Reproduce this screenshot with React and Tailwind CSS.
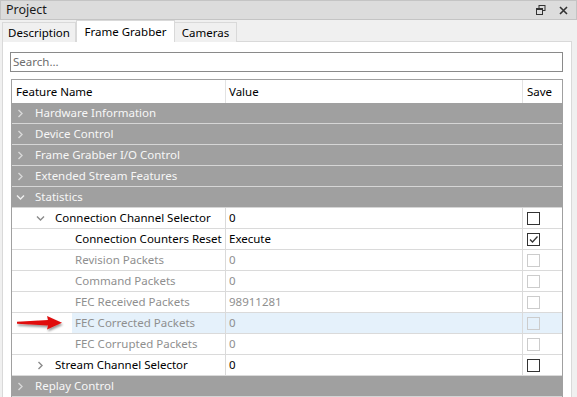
import React from "react";

const Chevron = ({ open, color = "#8a8a8a" }) => (
  <svg width="9" height="9" viewBox="0 0 9 9" className="shrink-0">
    {open ? (
      <path d="M1 2.5 L4.5 6 L8 2.5" fill="none" stroke={color} strokeWidth="1.4" />
    ) : (
      <path d="M2.5 1 L6 4.5 L2.5 8" fill="none" stroke={color} strokeWidth="1.4" />
    )}
  </svg>
);

const Check = ({ checked, disabled }) => (
  <div
    className={`w-[13px] h-[13px] border flex items-center justify-center ${
      disabled ? "border-[#cccccc]" : "border-[#333333]"
    }`}
  >
    {checked && (
      <svg width="11" height="11" viewBox="0 0 11 11">
        <path d="M2 5.5 L4.5 8 L9.5 2.5" fill="none" stroke="#333" strokeWidth="1.3" />
      </svg>
    )}
  </div>
);

const GroupRow = ({ label, open }) => (
  <div className="flex items-center h-[21px] bg-[#a0a0a0] border-b border-[#d6d6d6] text-[#f7f7f7] whitespace-nowrap">
    <div className="pl-[4px] w-[23px] flex">
      <Chevron open={open} color={open ? "#f0f0f0" : "#d8d8d8"} />
    </div>
    <span>{label}</span>
  </div>
);

const Row = ({ label, value, indent, chevron, disabled, checked, highlight }) => (
  <div
    className={`flex h-[21px] border-b border-[#dadada] whitespace-nowrap ${
      highlight ? "bg-[#e5f1fb]" : "bg-white"
    } ${disabled ? "text-[#8f8f8f]" : "text-black"}`}
  >
    <div className="w-[214px] flex items-center border-r border-[#dadada] bg-white">
      <div className="flex items-center h-full shrink-0" style={{ width: indent }}>
        {chevron && (
          <div className="w-full flex justify-end pr-[10px]">
            <Chevron open={chevron === "open"} />
          </div>
        )}
      </div>
      <div
        className={`flex-1 h-full flex items-center ${
          highlight ? "bg-[#e5f1fb] -ml-[3px] pl-[3px]" : ""
        }`}
      >
        {label}
      </div>
    </div>
    <div className="w-[297px] flex items-center pl-[3px] border-r border-[#dadada]">{value}</div>
    <div className="flex-1 flex items-center pl-[4px]">
      <Check checked={checked} disabled={disabled} />
    </div>
  </div>
);

const App = () => {
  return (
    <div
      className="w-[577px] h-[397px] bg-[#f0f0f0] overflow-hidden text-[11.5px] relative"
      style={{ fontFamily: "'Noto Sans', 'Open Sans', sans-serif" }}
    >
      {/* title bar */}
      <div className="h-[20px] bg-[#dcdcdc] border border-[#c4c4c4] flex items-center justify-between pl-[5px] pr-[8px]">
        <span className="text-[12.5px] text-[#1a1a1a]">Project</span>
        <div className="flex items-center gap-[13px]">
          <svg width="10" height="10" viewBox="0 0 10 10">
            <rect x="3" y="0.5" width="6" height="5" fill="none" stroke="#333" strokeWidth="1" />
            <rect x="0.5" y="3.5" width="6" height="6" fill="#dcdcdc" stroke="#333" strokeWidth="1" />
            <line x1="0.5" y1="4.5" x2="6.5" y2="4.5" stroke="#333" />
          </svg>
          <svg width="9" height="9" viewBox="0 0 9 9">
            <path d="M1 1 L8 8 M8 1 L1 8" stroke="#333" strokeWidth="1.6" />
          </svg>
        </div>
      </div>

      {/* tabs */}
      <div className="flex items-end h-[22px] pl-[2px] relative z-10">
        <div className="h-[20px] w-[74px] flex items-center justify-center border border-b-0 border-[#d9d9d9] bg-[#f0f0f0]">
          Description
        </div>
        <div className="h-[22px] w-[99px] flex items-center justify-center border border-b-0 border-[#d9d9d9] bg-white">
          Frame Grabber
        </div>
        <div className="h-[20px] w-[62px] flex items-center justify-center border border-b-0 border-l-0 border-[#d9d9d9] bg-[#f0f0f0]">
          Cameras
        </div>
      </div>

      {/* panel */}
      <div className="ml-[2px] mr-[5px] -mt-[1px] h-[360px] bg-white border border-[#d9d9d9] pt-[10px] pl-[7px] pr-[8px]">
        <div className="h-[20px] border border-[#8a8a8a] flex items-center pl-[2px] text-[#6d6d6d]">
          Search…
        </div>

        <div className="mt-[7px] ml-[1px] border-l border-r border-t border-[#a0a0a0] h-[400px] relative">
          <div className="flex h-[23px] items-center bg-white text-black">
            <div className="w-[214px] h-full flex items-center pl-[4px] border-r border-[#e3e3e3]">Feature Name</div>
            <div className="w-[297px] h-full flex items-center pl-[3px] border-r border-[#e3e3e3]">Value</div>
            <div className="flex-1 h-full flex items-center pl-[4px]">Save</div>
          </div>
          <GroupRow label="Hardware Information" />
          <GroupRow label="Device Control" />
          <GroupRow label="Frame Grabber I/O Control" />
          <GroupRow label="Extended Stream Features" />
          <GroupRow label="Statistics" open />
          <Row label="Connection Channel Selector" value="0" indent={43} chevron="open" />
          <Row label="Connection Counters Reset" value="Execute" indent={63} checked />
          <Row label="Revision Packets" value="0" indent={63} disabled />
          <Row label="Command Packets" value="0" indent={63} disabled />
          <Row label="FEC Received Packets" value="98911281" indent={63} disabled />
          <Row label="FEC Corrected Packets" value="0" indent={63} disabled highlight />
          <Row label="FEC Corrupted Packets" value="0" indent={63} disabled />
          <Row label="Stream Channel Selector" value="0" indent={43} chevron="closed" />
          <GroupRow label="Replay Control" />
        </div>
      </div>

      {/* red arrow pointer */}
      <svg className="absolute left-[14px] top-[313px]" width="54" height="22" viewBox="0 0 54 22">
        <defs>
          <filter id="sh" x="-20%" y="-50%" width="140%" height="200%">
            <feDropShadow dx="1" dy="2" stdDeviation="1.3" floodColor="#000" floodOpacity="0.4" />
          </filter>
        </defs>
        <g filter="url(#sh)">
          <path d="M3 8.8 L34 7 L33 3 L48 9.8 L33 16.5 L34 12.5 L3 10.8 Z" fill="#e01010" />
        </g>
      </svg>
    </div>
  );
};

export default App;
